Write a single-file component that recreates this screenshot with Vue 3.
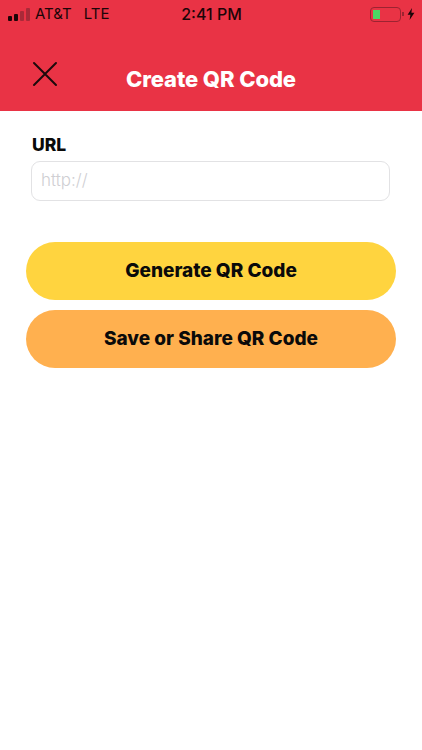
<script setup>
const signal = [
  { h: 5, dim: false },
  { h: 7, dim: false },
  { h: 10, dim: true },
  { h: 13, dim: true },
]
</script>

<template>
  <div class="screen">
    <header class="header">
      <div class="status">
        <div class="status-left">
          <div class="signal">
            <span v-for="(b, i) in signal" :key="i" class="bar" :class="{ dim: b.dim }" :style="{ height: b.h + 'px' }"></span>
          </div>
          <span class="carrier">AT&amp;T</span>
          <span class="carrier net">LTE</span>
        </div>
        <span class="time">2:41 PM</span>
        <div class="status-right">
          <div class="battery"><span class="level"></span></div>
          <span class="nub"></span>
          <svg class="bolt" width="8" height="12" viewBox="0 0 8 12"><path d="M5 0 L0.6 6.8 H3.4 L2.6 12 L7.4 4.8 H4.4 Z" fill="#1a0508"/></svg>
        </div>
      </div>
      <div class="nav">
        <svg class="close" width="26" height="26" viewBox="0 0 26 26">
          <path d="M2 2 L24 24 M24 2 L2 24" stroke="#1c0a0c" stroke-width="2" stroke-linecap="round"/>
        </svg>
        <h1 class="title">Create QR Code</h1>
        <span></span>
      </div>
    </header>
    <main class="body">
      <label class="label">URL</label>
      <div class="input"><span class="placeholder">http://</span></div>
      <div class="actions">
        <button class="btn yellow">Generate QR Code</button>
        <button class="btn orange">Save or Share QR Code</button>
      </div>
    </main>
  </div>
</template>

<style scoped>
.screen {
  width: 422px;
  height: 750px;
  background: #fff;
  font-family: Inter, "Noto Sans", sans-serif;
  overflow: hidden;
}
.header {
  height: 111px;
  background: #e93345;
}
.status {
  height: 28px;
  display: grid;
  grid-template-columns: 1fr auto 1fr;
  align-items: center;
  padding: 0 7px 0 8px;
  color: #1c0508;
  font-size: 15px;
  font-family: Inter, sans-serif;
}
.status-left { display: flex; align-items: center; }
.signal { display: flex; align-items: flex-end; gap: 2px; margin-right: 5px; }
.bar { width: 4px; background: #1c0508; border-radius: 1px; }
.bar.dim { background: #a92a38; }
.carrier { line-height: 18px; }
.net { margin-left: 12px; }
.time { font-weight: 500; font-size: 16px; }
.status-right { display: flex; align-items: center; justify-content: flex-end; }
.battery {
  width: 31px;
  height: 15px;
  border: 1px solid #9c2331;
  border-radius: 4px;
  box-sizing: border-box;
  padding: 2px;
  display: flex;
}
.level { width: 7px; background: #4cd964; }
.nub { width: 1.5px; height: 4px; background: #9c2331; margin-left: 1px; margin-right: 3.5px; }
.nav {
  height: 83px;
  box-sizing: border-box;
  padding-top: 33px;
  display: grid;
  grid-template-columns: 90px 1fr 90px;
  align-items: start;
}
.close { margin-left: 32px; }
.title {
  margin: 3px 0 0;
  text-align: center;
  color: #fff;
  font-size: 22px;
  font-weight: 800;
  line-height: 30px;
  letter-spacing: -0.1px;
}
.body {
  display: flex;
  flex-direction: column;
  padding: 23px 26px 0;
}
.label {
  margin-left: 6px;
  font-size: 17.5px;
  font-weight: 800;
  line-height: 22px;
  color: #0a0a0a;
}
.input {
  width: 359px;
  height: 40px;
  margin: 5px 0 0 5px;
  box-sizing: border-box;
  border: 1.5px solid #e2e2e4;
  border-radius: 9px;
  display: flex;
  align-items: center;
  padding-left: 9px;
}
.placeholder { color: #cfcfd3; font-size: 17px; font-weight: 300; margin-top: -3px; }
.actions {
  display: flex;
  flex-direction: column;
  gap: 10px;
  margin-top: 41px;
}
.btn {
  width: 370px;
  height: 58px;
  border: 0;
  border-radius: 29px;
  font-family: inherit;
  font-size: 19px;
  font-weight: 800;
  color: #0a0a0a;
  padding: 0 0 1px;
}
.yellow { background: #ffd43f; }
.orange { background: #ffb04f; }
</style>
